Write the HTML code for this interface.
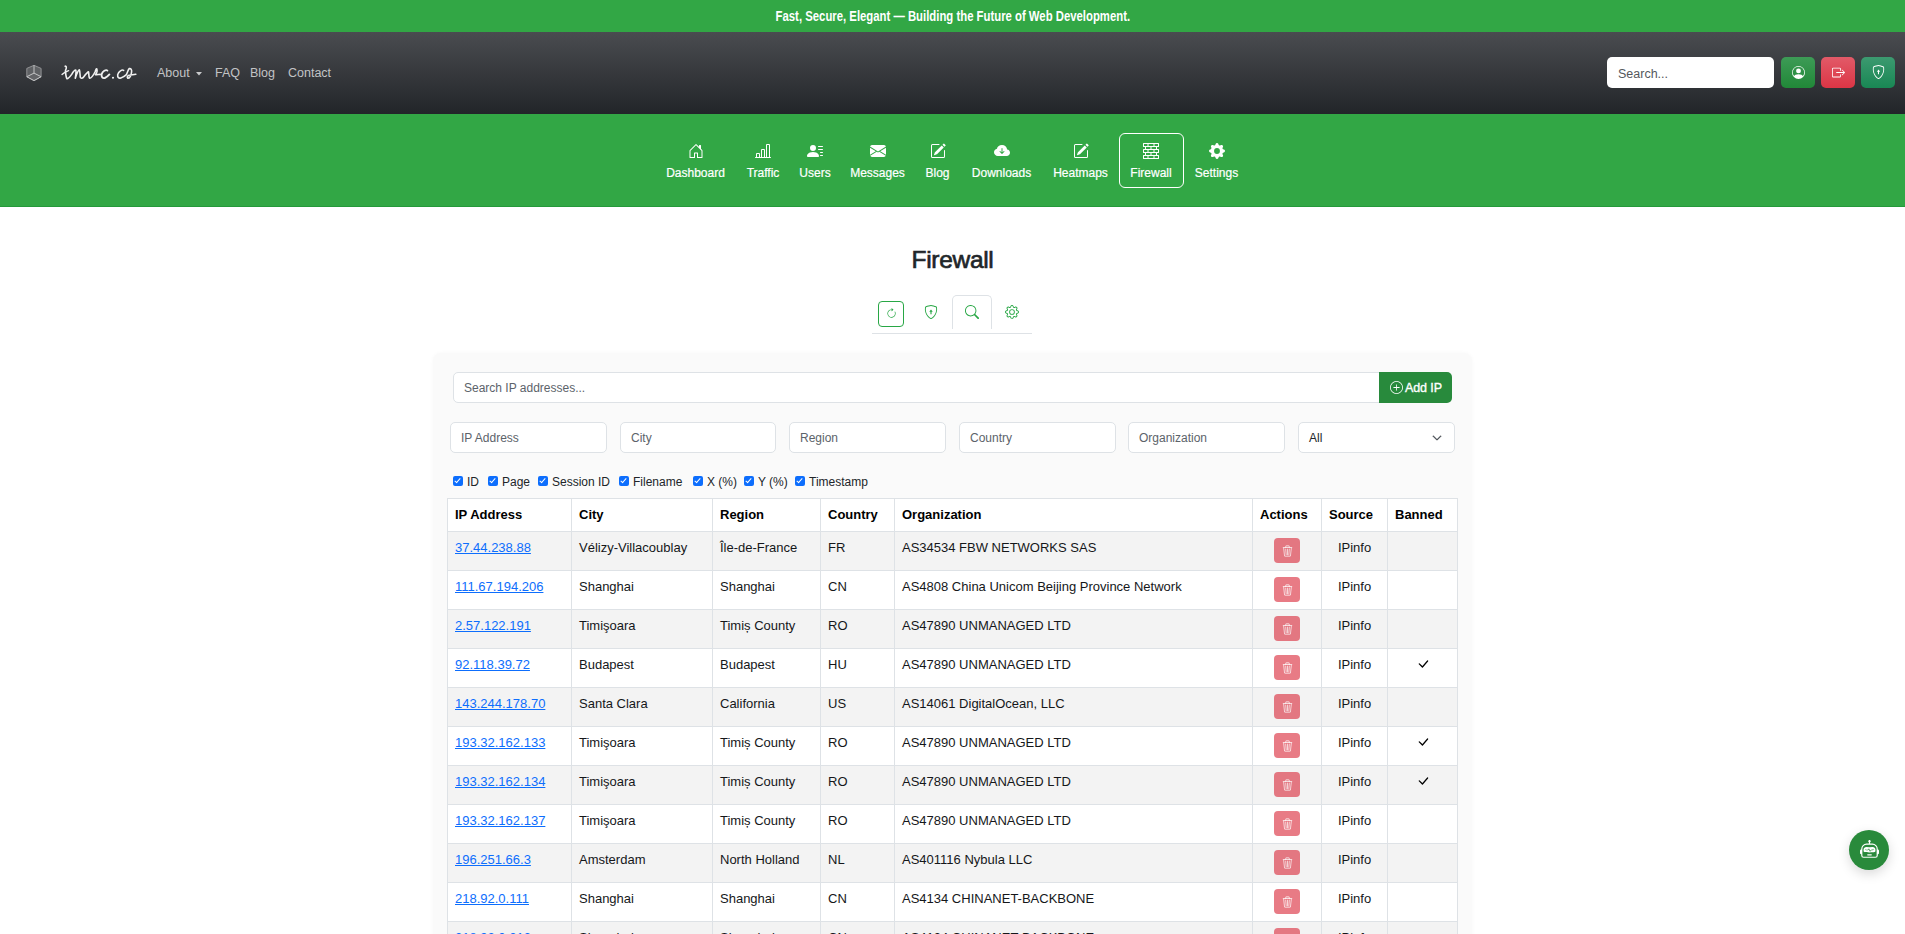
<!DOCTYPE html>
<html><head><meta charset="utf-8">
<style>
*{box-sizing:border-box;margin:0;padding:0}
html,body{width:1905px;height:934px;overflow:hidden;background:#fff;font-family:"Liberation Sans",sans-serif;color:#212529}
.abs{position:absolute}
.banner{position:absolute;left:0;top:0;width:1905px;height:32px;background:#32a745;color:#fff;font-weight:bold;font-size:14px;text-align:center;line-height:32px}
.navbar{position:absolute;left:0;top:32px;width:1905px;height:82px;background:linear-gradient(180deg,#4a4c50 0%,#222529 100%)}
.navlink{position:absolute;top:33px;font-size:12.5px;color:#c2c3c5;line-height:16px}
.search{position:absolute;left:1607px;top:25px;width:167px;height:31px;background:#fff;border-radius:5px;font-size:12.5px;color:#54585c;padding-left:11px;line-height:34px}
.hbtn{position:absolute;top:25px;width:34px;height:31px;border-radius:5px}
.subnav{position:absolute;left:0;top:114px;width:1905px;height:93px;background:#32a745;border-bottom:1px solid #24993a}
.item{position:absolute;top:19px;width:80px;height:55px;text-align:center;color:#fff;font-size:12px}
.item svg{position:absolute;top:10px;left:50%;transform:translateX(-50%)}
.item span{position:absolute;left:0;right:0;top:32px;line-height:16px;-webkit-text-stroke:0.2px #fff}
.item.active{border:1px solid #fff;border-radius:6px}

.title{position:absolute;left:0;width:1905px;top:245px;text-align:center;font-size:24.5px;font-weight:normal;letter-spacing:-0.3px;-webkit-text-stroke:0.65px #212529;line-height:30px;color:#212529}
.tabs{position:absolute;left:872px;top:295px;width:160px;height:39px;border-bottom:1px solid #dee2e6}
.tabs svg{position:absolute}
.card{position:absolute;left:433px;top:353px;width:1039px;height:700px;background:#fafafa;border-radius:8px;box-shadow:0 0 4px rgba(0,0,0,.03)}
.inp{position:absolute;background:#fff;border:1px solid #dee2e6;border-radius:5px;font-size:12px;color:#5c636a;padding-left:10px}
.cb{position:absolute;top:123px;height:14px;font-size:12px;line-height:14px;color:#212529;white-space:nowrap}
.cb i{position:absolute;left:0;top:0px;width:10px;height:10px;background:#0d6efd;border-radius:2px}
.cb i:after{content:"";position:absolute;left:3.3px;top:1px;width:2.2px;height:5px;border:solid #fff;border-width:0 1.4px 1.4px 0;transform:rotate(42deg)}
table{position:absolute;left:14px;top:145px;border-collapse:collapse;table-layout:fixed;font-size:13px;color:#15171a}
td,th{border:1px solid #dee2e6;padding:6px 7px;vertical-align:top;text-align:left;line-height:19.5px;white-space:nowrap;overflow:hidden}
th{height:33px;padding-top:6px;font-weight:bold;color:#000;background:#fff}
tbody tr:nth-child(odd) td{background:#f3f3f3}
tbody tr:nth-child(even) td{background:#fff}
td{height:39px}
td a{color:#0d6efd;text-decoration:underline}
.del{display:inline-block;width:26px;height:25px;border-radius:4px;background:#dc3545;opacity:.65;position:relative;vertical-align:top}
.del svg{position:absolute;left:7.5px;top:6.5px}
.c{text-align:center}
</style></head>
<body>
<div class="banner"><span style="display:inline-block;transform:scaleX(0.81);transform-origin:50% 50%;white-space:nowrap">Fast, Secure, Elegant — Building the Future of Web Development.</span></div>
<div class="navbar">
  <svg class="abs" style="left:26px;top:32px" width="16" height="18" viewBox="0 0 16 18">
    <path d="M8 1.3 L15.1 4.4 L15.1 12.7 L8 16.6 L0.8 12.7 L0.8 4.4 Z" fill="#5f6164" stroke="#9a9b9d" stroke-width="0.9" stroke-linejoin="round"/>
    <path d="M8 9.1 L0.8 12.7 L8 16.6 L15.1 12.7 Z" fill="#636467" stroke="#c4c5c6" stroke-width="1" stroke-linejoin="round"/>
    <path d="M8 1.3 V9.1" stroke="#b9babb" stroke-width="1.1"/>
  </svg>
  <svg class="abs" style="left:0;top:0" width="150" height="82" viewBox="0 32 150 82" fill="none" stroke="#f0f0f0" stroke-width="1.4" stroke-linecap="round" stroke-linejoin="round">
    <path d="M62,74.4 C64,72.6 66.5,71.2 68.6,70.6"/>
    <path d="M65.2,66.2 C66.3,65.9 66.9,67.4 65.5,70.4 C65.6,73.5 65.8,77 67,78.7 C68.8,78.8 70.5,76 71.8,74.2 C73,72 74.5,70 75.7,70 C76.3,70.8 76,74 75.3,78.2 C76.5,74.5 78,70.2 79.4,69.8 C80,70.8 80,75 80.3,77.3 C80.9,78.8 82.6,78.5 84,76.5 C85.5,74.5 87,72.5 88.5,71.8 C89,73 88.5,76.5 89.5,78.2 C91.5,78.4 93.5,75 95,72 C95.8,70 96.2,68.5 96.7,68.8 C97.3,70 96.7,73 95.5,74.8 C97.5,74.8 98.8,74.4 100.2,74.4" stroke-width="1.6"/>
    <path d="M107.4,70.6 C106,69.4 102.5,71 101.6,74.2 C101.2,77 102.5,78.6 104.8,78 C106.5,77.4 108,76 109.4,74.4" stroke-width="1.9"/>
    <path d="M123.6,70.4 C122.2,69.3 118.6,71.2 117.7,74.6 C117.4,77.2 118.6,78.6 120.8,78 C122.6,77.4 124.6,76.2 126.4,74.6 C127.6,72 128.2,69.6 129.2,68.6 C130.8,68.2 131.9,69.5 131.6,71.8 C131.2,75 129.6,78.2 127.8,78.2 C126.8,77.6 127.4,75.6 129,75.2 C131.5,75 134,74.6 135.8,74.2" stroke-width="1.6"/>
    <circle cx="113" cy="77.7" r="1.05" fill="#f0f0f0" stroke="none"/>
  </svg>
  <div class="navlink" style="left:157px">About</div>
  <svg class="abs" style="left:196px;top:40px" width="6" height="4"><path d="M0 0H6L3 3.5Z" fill="#c9cacc"/></svg>
  <div class="navlink" style="left:215px">FAQ</div>
  <div class="navlink" style="left:250px">Blog</div>
  <div class="navlink" style="left:288px">Contact</div>
  <div class="search">Search...</div>
  <div class="hbtn" style="left:1781px;background:linear-gradient(180deg,#3d9b56,#218838)"><svg style="position:absolute;left:10.5px;top:8.5px" width="13" height="13" viewBox="0 0 16 16" fill="#fff"><path d="M11 6a3 3 0 1 1-6 0 3 3 0 0 1 6 0"/><path fill-rule="evenodd" d="M0 8a8 8 0 1 1 16 0A8 8 0 0 1 0 8m8-7a7 7 0 0 0-5.468 11.37C3.242 11.226 4.805 10 8 10s4.757 1.225 5.468 2.37A7 7 0 0 0 8 1"/></svg></div>
  <div class="hbtn" style="left:1821px;background:linear-gradient(180deg,#e25a68,#dc3545)"><svg style="position:absolute;left:10.5px;top:9px" width="13" height="13" viewBox="0 0 16 16" fill="#fff"><path fill-rule="evenodd" d="M10 12.5a.5.5 0 0 1-.5.5h-8a.5.5 0 0 1-.5-.5v-9a.5.5 0 0 1 .5-.5h8a.5.5 0 0 1 .5.5v2a.5.5 0 0 0 1 0v-2A1.5 1.5 0 0 0 9.5 2h-8A1.5 1.5 0 0 0 0 3.5v9A1.5 1.5 0 0 0 1.5 14h8a1.5 1.5 0 0 0 1.5-1.5v-2a.5.5 0 0 0-1 0z"/><path fill-rule="evenodd" d="M15.854 8.354a.5.5 0 0 0 0-.708l-3-3a.5.5 0 0 0-.708.708L14.293 7.5H5.5a.5.5 0 0 0 0 1h8.793l-2.147 2.146a.5.5 0 0 0 .708.708z"/></svg></div>
  <div class="hbtn" style="left:1861px;background:linear-gradient(180deg,#3c9a70,#198754)"><svg style="position:absolute;left:10.5px;top:7.5px" width="13" height="14" viewBox="0 0 16 16" preserveAspectRatio="none" fill="#fff"><path d="M5.338 1.59a61 61 0 0 0-2.837.856.48.48 0 0 0-.328.39c-.554 4.157.726 7.19 2.253 9.188a10.7 10.7 0 0 0 2.287 2.233c.346.244.652.42.893.533q.18.085.293.118a1 1 0 0 0 .101.025 1 1 0 0 0 .1-.025q.114-.034.294-.118c.24-.113.547-.29.893-.533a10.7 10.7 0 0 0 2.287-2.233c1.527-1.997 2.807-5.031 2.253-9.188a.48.48 0 0 0-.328-.39c-.651-.213-1.75-.56-2.837-.855C9.552 1.290 8.531 1.067 8 1.067c-.53 0-1.552.223-2.662.524zM5.072.56C6.157.265 7.31 0 8 0s1.843.265 2.928.56c1.11.3 2.229.655 2.887.87a1.54 1.54 0 0 1 1.044 1.262c.596 4.477-.787 7.795-2.465 9.99a11.8 11.8 0 0 1-2.517 2.453 7 7 0 0 1-1.048.625c-.28.132-.581.24-.829.24s-.548-.108-.829-.24a7 7 0 0 1-1.048-.625 11.8 11.8 0 0 1-2.517-2.453C1.928 10.487.545 7.169 1.141 2.692A1.54 1.54 0 0 1 2.185 1.43 63 63 0 0 1 5.072.56"/><path d="M8 5.2 L10 7.6 H8.65 V10.6 H7.35 V7.6 H6 Z"/></svg></div>
</div>
<div class="subnav">
  <div class="item" style="left:655.5px"><svg width="16" height="16" viewBox="0 0 16 16" fill="#fff"><path d="M8.354 1.146a.5.5 0 0 0-.708 0l-6 6A.5.5 0 0 0 1.5 7.5v7a.5.5 0 0 0 .5.5h4.5a.5.5 0 0 0 .5-.5v-4h2v4a.5.5 0 0 0 .5.5H14a.5.5 0 0 0 .5-.5v-7a.5.5 0 0 0-.146-.354L13 5.793V2.5a.5.5 0 0 0-.5-.5h-1a.5.5 0 0 0-.5.5v1.293zM2.5 14V7.707l5.5-5.5 5.5 5.5V14H10v-4a.5.5 0 0 0-.5-.5h-3a.5.5 0 0 0-.5.5v4z"/></svg><span>Dashboard</span></div>
  <div class="item" style="left:723px"><svg width="16" height="16" viewBox="0 0 16 16" fill="#fff"><path d="M11 2a1 1 0 0 1 1-1h2a1 1 0 0 1 1 1v12h.5a.5.5 0 0 1 0 1H.5a.5.5 0 0 1 0-1H1v-3a1 1 0 0 1 1-1h2a1 1 0 0 1 1 1v3h1V7a1 1 0 0 1 1-1h2a1 1 0 0 1 1 1v7h1zm1 12h2V2h-2zm-3 0V7H7v7zm-5 0v-3H2v3z"/></svg><span>Traffic</span></div>
  <div class="item" style="left:775px"><svg width="16" height="16" viewBox="0 0 16 16" fill="#fff"><path d="M6 8a3 3 0 1 0 0-6 3 3 0 0 0 0 6m-5 6s-1 0-1-1 1-4 6-4 6 3 6 4-1 1-1 1zM11 3.5a.5.5 0 0 1 .5-.5h4a.5.5 0 0 1 0 1h-4a.5.5 0 0 1-.5-.5m.5 2.5a.5.5 0 0 0 0 1h4a.5.5 0 0 0 0-1zm2 3a.5.5 0 0 0 0 1h2a.5.5 0 0 0 0-1zm0 3a.5.5 0 0 0 0 1h2a.5.5 0 0 0 0-1z"/></svg><span>Users</span></div>
  <div class="item" style="left:837.5px"><svg width="16" height="16" viewBox="0 0 16 16" fill="#fff"><path d="M.05 3.555A2 2 0 0 1 2 2h12a2 2 0 0 1 1.95 1.555L8 8.414zM0 4.697v7.104l5.803-3.558zM6.761 8.83l-6.57 4.027A2 2 0 0 0 2 14h12a2 2 0 0 0 1.808-1.144l-6.57-4.027L8 9.586zm3.436-.586L16 11.801V4.697z"/></svg><span>Messages</span></div>
  <div class="item" style="left:897.5px"><svg width="16" height="16" viewBox="0 0 16 16" fill="#fff"><path d="M15.502 1.94a.5.5 0 0 1 0 .706L14.459 3.69l-2-2L13.502.646a.5.5 0 0 1 .707 0l1.293 1.293zm-1.75 2.456-2-2L4.939 9.21a.5.5 0 0 0-.121.196l-.805 2.414a.25.25 0 0 0 .316.316l2.414-.805a.5.5 0 0 0 .196-.12l6.813-6.814z"/><path fill-rule="evenodd" d="M1 13.5A1.5 1.5 0 0 0 2.5 15h11a1.5 1.5 0 0 0 1.5-1.5v-6a.5.5 0 0 0-1 0v6a.5.5 0 0 1-.5.5h-11a.5.5 0 0 1-.5-.5v-11a.5.5 0 0 1 .5-.5H9a.5.5 0 0 0 0-1H2.5A1.5 1.5 0 0 0 1 2.5z"/></svg><span>Blog</span></div>
  <div class="item" style="left:961.5px"><svg width="16" height="16" viewBox="0 0 16 16" fill="#fff"><path d="M8 2a5.53 5.53 0 0 0-3.594 1.342c-.766.66-1.321 1.52-1.464 2.383C1.266 6.095 0 7.555 0 9.318 0 11.366 1.708 13 3.781 13h8.906C14.502 13 16 11.57 16 9.773c0-1.636-1.242-2.969-2.834-3.194C12.923 3.999 10.69 2 8 2m2.354 6.854-2 2a.5.5 0 0 1-.708 0l-2-2a.5.5 0 1 1 .708-.708L7.5 9.293V5.5a.5.5 0 0 1 1 0v3.793l1.146-1.147a.5.5 0 0 1 .708.708"/></svg><span>Downloads</span></div>
  <div class="item" style="left:1040.5px"><svg width="16" height="16" viewBox="0 0 16 16" fill="#fff"><path d="M15.502 1.94a.5.5 0 0 1 0 .706L14.459 3.69l-2-2L13.502.646a.5.5 0 0 1 .707 0l1.293 1.293zm-1.75 2.456-2-2L4.939 9.21a.5.5 0 0 0-.121.196l-.805 2.414a.25.25 0 0 0 .316.316l2.414-.805a.5.5 0 0 0 .196-.12l6.813-6.814z"/><path fill-rule="evenodd" d="M1 13.5A1.5 1.5 0 0 0 2.5 15h11a1.5 1.5 0 0 0 1.5-1.5v-6a.5.5 0 0 0-1 0v6a.5.5 0 0 1-.5.5h-11a.5.5 0 0 1-.5-.5v-11a.5.5 0 0 1 .5-.5H9a.5.5 0 0 0 0-1H2.5A1.5 1.5 0 0 0 1 2.5z"/></svg><span>Heatmaps</span></div>
  <div class="item" style="left:1111px"><svg width="16" height="16" viewBox="0 0 16 16" fill="#fff"><path d="M0 .5A.5.5 0 0 1 .5 0h15a.5.5 0 0 1 .5.5v3a.5.5 0 0 1-.5.5H14v2h1.5a.5.5 0 0 1 .5.5v3a.5.5 0 0 1-.5.5H14v2h1.5a.5.5 0 0 1 .5.5v3a.5.5 0 0 1-.5.5H.5a.5.5 0 0 1-.5-.5v-3a.5.5 0 0 1 .5-.5H2v-2H.5a.5.5 0 0 1-.5-.5v-3A.5.5 0 0 1 .5 6H2V4H.5a.5.5 0 0 1-.5-.5zM3 4v2h4.5V4zm5.5 0v2H13V4zM3 10v2h4.5v-2zm5.5 0v2H13v-2zM1 1v2h3.5V1zm4.5 0v2h5V1zm6 0v2H15V1zM1 7v2h3.5V7zm4.5 0v2h5V7zm6 0v2H15V7zM1 13v2h3.5v-2zm4.5 0v2h5v-2zm6 0v2H15v-2z"/></svg><span>Firewall</span></div>
  <div class="item" style="left:1176.5px"><svg width="16" height="16" viewBox="0 0 16 16" fill="#fff"><path d="M9.405 1.05c-.413-1.4-2.397-1.4-2.81 0l-.1.34a1.464 1.464 0 0 1-2.105.872l-.31-.17c-1.283-.698-2.686.705-1.987 1.987l.169.311c.446.82.023 1.841-.872 2.105l-.34.1c-1.4.413-1.4 2.397 0 2.81l.34.1a1.464 1.464 0 0 1 .872 2.105l-.17.31c-.698 1.283.705 2.686 1.987 1.987l.311-.169a1.464 1.464 0 0 1 2.105.872l.1.34c.413 1.4 2.397 1.4 2.81 0l.1-.34a1.464 1.464 0 0 1 2.105-.872l.31.17c1.283.698 2.686-.705 1.987-1.987l-.169-.311a1.464 1.464 0 0 1 .872-2.105l.34-.1c1.4-.413 1.4-2.397 0-2.81l-.34-.1a1.464 1.464 0 0 1-.872-2.105l.17-.31c.698-1.283-.705-2.686-1.987-1.987l-.311.169a1.464 1.464 0 0 1-2.105-.872zM8 10.93a2.929 2.929 0 1 1 0-5.86 2.929 2.929 0 0 1 0 5.858z"/></svg><span>Settings</span></div>
  <div class="active" style="position:absolute;left:1119px;top:19px;width:65px;height:55px;border:1px solid #fff;border-radius:6px"></div>
</div>

<div class="title">Firewall</div>
<div class="tabs">
  <div style="position:absolute;left:6px;top:6px;width:26px;height:26px;border:1.5px solid #28a745;border-radius:4px"></div>
  <svg style="left:14px;top:13px" width="11" height="11" viewBox="0 0 16 16" fill="#28a745"><path fill-rule="evenodd" d="M8 3a5 5 0 1 0 4.546 2.914.5.5 0 0 1 .908-.417A6 6 0 1 1 8 2z"/><path d="M8 4.466V.534a.25.25 0 0 1 .41-.192l2.36 1.966c.12.1.12.284 0 .384L8.41 4.658A.25.25 0 0 1 8 4.466"/></svg>
  <svg style="left:52px;top:9.5px" width="14" height="14" viewBox="0 0 16 16" fill="#28a745"><path d="M5.338 1.59a61 61 0 0 0-2.837.856.48.48 0 0 0-.328.39c-.554 4.157.726 7.19 2.253 9.188a10.7 10.7 0 0 0 2.287 2.233c.346.244.652.42.893.533q.18.085.293.118a1 1 0 0 0 .101.025 1 1 0 0 0 .1-.025q.114-.034.294-.118c.24-.113.547-.29.893-.533a10.7 10.7 0 0 0 2.287-2.233c1.527-1.997 2.807-5.031 2.253-9.188a.48.48 0 0 0-.328-.39c-.651-.213-1.75-.56-2.837-.855C9.552 1.290 8.531 1.067 8 1.067c-.53 0-1.552.223-2.662.524zM5.072.56C6.157.265 7.31 0 8 0s1.843.265 2.928.56c1.11.3 2.229.655 2.887.87a1.54 1.54 0 0 1 1.044 1.262c.596 4.477-.787 7.795-2.465 9.99a11.8 11.8 0 0 1-2.517 2.453 7 7 0 0 1-1.048.625c-.28.132-.581.24-.829.24s-.548-.108-.829-.24a7 7 0 0 1-1.048-.625 11.8 11.8 0 0 1-2.517-2.453C1.928 10.487.545 7.169 1.141 2.692A1.54 1.54 0 0 1 2.185 1.43 63 63 0 0 1 5.072.56"/><path d="M8 5.2 L10 7.6 H8.65 V10.6 H7.35 V7.6 H6 Z"/></svg>
  <div style="position:absolute;left:80px;top:0;width:40px;height:34px;border:1px solid #dee2e6;border-bottom:0;border-radius:5px 5px 0 0;background:#fff"></div>
  <svg style="left:93px;top:9.5px" width="14" height="14" viewBox="0 0 16 16" fill="#28a745"><path d="M11.742 10.344a6.5 6.5 0 1 0-1.397 1.398h-.001q.044.06.098.115l3.850 3.850a1 1 0 0 0 1.415-1.414l-3.850-3.850a1 1 0 0 0-.115-.1zM12 6.5a5.5 5.5 0 1 1-11 0 5.5 5.5 0 0 1 11 0"/></svg>
  <svg style="left:133px;top:9.5px" width="14" height="14" viewBox="0 0 16 16" fill="#28a745"><path d="M8 4.754a3.246 3.246 0 1 0 0 6.492 3.246 3.246 0 0 0 0-6.492M5.754 8a2.246 2.246 0 1 1 4.492 0 2.246 2.246 0 0 1-4.492 0"/><path d="M9.796 1.343c-.527-1.790-3.065-1.790-3.592 0l-.094.319a.873.873 0 0 1-1.255.52l-.292-.16c-1.640-.892-3.433.902-2.540 2.541l.159.292a.873.873 0 0 1-.52 1.255l-.319.094c-1.790.527-1.790 3.065 0 3.592l.319.094a.873.873 0 0 1 .52 1.255l-.16.292c-.892 1.640.901 3.434 2.541 2.540l.292-.159a.873.873 0 0 1 1.255.52l.094.319c.527 1.790 3.065 1.790 3.592 0l.094-.319a.873.873 0 0 1 1.255-.52l.292.16c1.640.893 3.434-.902 2.540-2.541l-.159-.292a.873.873 0 0 1 .52-1.255l.319-.094c1.790-.527 1.790-3.065 0-3.592l-.319-.094a.873.873 0 0 1-.52-1.255l.16-.292c.893-1.640-.902-3.433-2.541-2.540l-.292.159a.873.873 0 0 1-1.255-.52zm-2.633.283c.246-.835 1.428-.835 1.674 0l.094.319a1.873 1.873 0 0 0 2.693 1.115l.291-.16c.764-.415 1.600.42 1.184 1.185l-.159.292a1.873 1.873 0 0 0 1.116 2.692l.318.094c.835.246.835 1.428 0 1.674l-.319.094a1.873 1.873 0 0 0-1.115 2.693l.16.291c.415.764-.42 1.600-1.185 1.184l-.291-.159a1.873 1.873 0 0 0-2.693 1.116l-.094.318c-.246.835-1.428.835-1.674 0l-.094-.319a1.873 1.873 0 0 0-2.692-1.115l-.292.16c-.764.415-1.600-.42-1.184-1.185l.159-.291A1.873 1.873 0 0 0 1.945 8.930l-.319-.094c-.835-.246-.835-1.428 0-1.674l.319-.094A1.873 1.873 0 0 0 3.060 4.377l-.16-.292c-.415-.764.42-1.600 1.185-1.184l.292.159a1.873 1.873 0 0 0 2.692-1.115z"/></svg>
</div>
<div class="card">
  <div class="inp" style="left:20px;top:19px;width:936px;height:31px;line-height:31px;border-radius:5px 0 0 5px">Search IP addresses...</div>
  <div style="position:absolute;left:946px;top:19px;width:73px;height:31px;background:#288a3c;border-radius:0 5px 5px 0;color:#fff;font-size:12.5px;font-weight:normal;-webkit-text-stroke:0.35px #fff;line-height:33px;padding-left:26px;letter-spacing:-0.1px">Add IP</div>
  <svg style="position:absolute;left:957px;top:28px" width="13" height="13" viewBox="0 0 16 16" fill="#fff"><path d="M8 15A7 7 0 1 1 8 1a7 7 0 0 1 0 14m0 1A8 8 0 1 0 8 0a8 8 0 0 0 0 16"/><path d="M8 4a.5.5 0 0 1 .5.5v3h3a.5.5 0 0 1 0 1h-3v3a.5.5 0 0 1-1 0v-3h-3a.5.5 0 0 1 0-1h3v-3A.5.5 0 0 1 8 4"/></svg>
  <div class="inp" style="left:17px;top:69px;width:157px;height:31px;line-height:31px">IP Address</div>
  <div class="inp" style="left:187px;top:69px;width:156px;height:31px;line-height:31px">City</div>
  <div class="inp" style="left:356px;top:69px;width:157px;height:31px;line-height:31px">Region</div>
  <div class="inp" style="left:526px;top:69px;width:157px;height:31px;line-height:31px">Country</div>
  <div class="inp" style="left:695px;top:69px;width:157px;height:31px;line-height:31px">Organization</div>
  <div class="inp" style="left:865px;top:69px;width:157px;height:31px;line-height:31px;color:#212529">All
    <svg style="position:absolute;right:12px;top:10px" width="10" height="10" viewBox="0 0 16 16" fill="#343a40"><path fill-rule="evenodd" stroke="#343a40" stroke-width="1" d="M1.646 4.646a.5.5 0 0 1 .708 0L8 10.293l5.646-5.647a.5.5 0 0 1 .708.708l-6 6a.5.5 0 0 1-.708 0l-6-6a.5.5 0 0 1 0-.708"/></svg>
  </div>
  <div class="cb" style="left:20px"><i></i><span style="position:absolute;left:14px;top:-1px">ID</span></div>
  <div class="cb" style="left:55px"><i></i><span style="position:absolute;left:14px;top:-1px">Page</span></div>
  <div class="cb" style="left:105px"><i></i><span style="position:absolute;left:14px;top:-1px">Session ID</span></div>
  <div class="cb" style="left:186px"><i></i><span style="position:absolute;left:14px;top:-1px">Filename</span></div>
  <div class="cb" style="left:260px"><i></i><span style="position:absolute;left:14px;top:-1px">X (%)</span></div>
  <div class="cb" style="left:311px"><i></i><span style="position:absolute;left:14px;top:-1px">Y (%)</span></div>
  <div class="cb" style="left:362px"><i></i><span style="position:absolute;left:14px;top:-1px">Timestamp</span></div>
  <table>
<colgroup><col style="width:124px"><col style="width:141px"><col style="width:108px"><col style="width:74px"><col style="width:358px"><col style="width:69px"><col style="width:66px"><col style="width:70px"></colgroup>
<thead><tr><th>IP Address</th><th>City</th><th>Region</th><th>Country</th><th>Organization</th><th>Actions</th><th>Source</th><th>Banned</th></tr></thead><tbody>
<tr><td><a>37.44.238.88</a></td><td>Vélizy-Villacoublay</td><td>Île-de-France</td><td>FR</td><td>AS34534 FBW NETWORKS SAS</td><td class="c"><span class="del"><svg width="11" height="12" viewBox="0 0 16 16" fill="#fff"><path d="M6.5 1h3a.5.5 0 0 1 .5.5v1H6v-1a.5.5 0 0 1 .5-.5M11 2.5v-1A1.5 1.5 0 0 0 9.5 0h-3A1.5 1.5 0 0 0 5 1.5v1H1.5a.5.5 0 0 0 0 1h.538l.853 10.66A2 2 0 0 0 4.885 16h6.23a2 2 0 0 0 1.994-1.84l.853-10.66h.538a.5.5 0 0 0 0-1zm1.958 1-.846 10.58a1 1 0 0 1-.997.92h-6.23a1 1 0 0 1-.997-.92L3.042 3.5zm-7.487 1a.5.5 0 0 1 .528.47l.5 8.5a.5.5 0 0 1-.998.06L5 5.03a.5.5 0 0 1 .47-.53Zm5.058 0a.5.5 0 0 1 .47.53l-.5 8.5a.5.5 0 1 1-.998-.06l.5-8.5a.5.5 0 0 1 .528-.47M8 4.5a.5.5 0 0 1 .5.5v8.5a.5.5 0 0 1-1 0V5a.5.5 0 0 1 .5-.5"/></svg></span></td><td class="c">IPinfo</td><td class="c"></td></tr>
<tr><td><a>111.67.194.206</a></td><td>Shanghai</td><td>Shanghai</td><td>CN</td><td>AS4808 China Unicom Beijing Province Network</td><td class="c"><span class="del"><svg width="11" height="12" viewBox="0 0 16 16" fill="#fff"><path d="M6.5 1h3a.5.5 0 0 1 .5.5v1H6v-1a.5.5 0 0 1 .5-.5M11 2.5v-1A1.5 1.5 0 0 0 9.5 0h-3A1.5 1.5 0 0 0 5 1.5v1H1.5a.5.5 0 0 0 0 1h.538l.853 10.66A2 2 0 0 0 4.885 16h6.23a2 2 0 0 0 1.994-1.84l.853-10.66h.538a.5.5 0 0 0 0-1zm1.958 1-.846 10.58a1 1 0 0 1-.997.92h-6.23a1 1 0 0 1-.997-.92L3.042 3.5zm-7.487 1a.5.5 0 0 1 .528.47l.5 8.5a.5.5 0 0 1-.998.06L5 5.03a.5.5 0 0 1 .47-.53Zm5.058 0a.5.5 0 0 1 .47.53l-.5 8.5a.5.5 0 1 1-.998-.06l.5-8.5a.5.5 0 0 1 .528-.47M8 4.5a.5.5 0 0 1 .5.5v8.5a.5.5 0 0 1-1 0V5a.5.5 0 0 1 .5-.5"/></svg></span></td><td class="c">IPinfo</td><td class="c"></td></tr>
<tr><td><a>2.57.122.191</a></td><td>Timişoara</td><td>Timiș County</td><td>RO</td><td>AS47890 UNMANAGED LTD</td><td class="c"><span class="del"><svg width="11" height="12" viewBox="0 0 16 16" fill="#fff"><path d="M6.5 1h3a.5.5 0 0 1 .5.5v1H6v-1a.5.5 0 0 1 .5-.5M11 2.5v-1A1.5 1.5 0 0 0 9.5 0h-3A1.5 1.5 0 0 0 5 1.5v1H1.5a.5.5 0 0 0 0 1h.538l.853 10.66A2 2 0 0 0 4.885 16h6.23a2 2 0 0 0 1.994-1.84l.853-10.66h.538a.5.5 0 0 0 0-1zm1.958 1-.846 10.58a1 1 0 0 1-.997.92h-6.23a1 1 0 0 1-.997-.92L3.042 3.5zm-7.487 1a.5.5 0 0 1 .528.47l.5 8.5a.5.5 0 0 1-.998.06L5 5.03a.5.5 0 0 1 .47-.53Zm5.058 0a.5.5 0 0 1 .47.53l-.5 8.5a.5.5 0 1 1-.998-.06l.5-8.5a.5.5 0 0 1 .528-.47M8 4.5a.5.5 0 0 1 .5.5v8.5a.5.5 0 0 1-1 0V5a.5.5 0 0 1 .5-.5"/></svg></span></td><td class="c">IPinfo</td><td class="c"></td></tr>
<tr><td><a>92.118.39.72</a></td><td>Budapest</td><td>Budapest</td><td>HU</td><td>AS47890 UNMANAGED LTD</td><td class="c"><span class="del"><svg width="11" height="12" viewBox="0 0 16 16" fill="#fff"><path d="M6.5 1h3a.5.5 0 0 1 .5.5v1H6v-1a.5.5 0 0 1 .5-.5M11 2.5v-1A1.5 1.5 0 0 0 9.5 0h-3A1.5 1.5 0 0 0 5 1.5v1H1.5a.5.5 0 0 0 0 1h.538l.853 10.66A2 2 0 0 0 4.885 16h6.23a2 2 0 0 0 1.994-1.84l.853-10.66h.538a.5.5 0 0 0 0-1zm1.958 1-.846 10.58a1 1 0 0 1-.997.92h-6.23a1 1 0 0 1-.997-.92L3.042 3.5zm-7.487 1a.5.5 0 0 1 .528.47l.5 8.5a.5.5 0 0 1-.998.06L5 5.03a.5.5 0 0 1 .47-.53Zm5.058 0a.5.5 0 0 1 .47.53l-.5 8.5a.5.5 0 1 1-.998-.06l.5-8.5a.5.5 0 0 1 .528-.47M8 4.5a.5.5 0 0 1 .5.5v8.5a.5.5 0 0 1-1 0V5a.5.5 0 0 1 .5-.5"/></svg></span></td><td class="c">IPinfo</td><td class="c"><svg width="14" height="14" viewBox="0 0 16 16" fill="#000" style="margin-top:2px;margin-left:1px"><path d="M12.736 3.97a.733.733 0 0 1 1.047 0c.286.289.29.756.01 1.05L7.88 12.01a.733.733 0 0 1-1.065.02L3.217 8.384a.757.757 0 0 1 0-1.06.733.733 0 0 1 1.047 0l3.052 3.093 5.4-6.425z"/></svg></td></tr>
<tr><td><a>143.244.178.70</a></td><td>Santa Clara</td><td>California</td><td>US</td><td>AS14061 DigitalOcean, LLC</td><td class="c"><span class="del"><svg width="11" height="12" viewBox="0 0 16 16" fill="#fff"><path d="M6.5 1h3a.5.5 0 0 1 .5.5v1H6v-1a.5.5 0 0 1 .5-.5M11 2.5v-1A1.5 1.5 0 0 0 9.5 0h-3A1.5 1.5 0 0 0 5 1.5v1H1.5a.5.5 0 0 0 0 1h.538l.853 10.66A2 2 0 0 0 4.885 16h6.23a2 2 0 0 0 1.994-1.84l.853-10.66h.538a.5.5 0 0 0 0-1zm1.958 1-.846 10.58a1 1 0 0 1-.997.92h-6.23a1 1 0 0 1-.997-.92L3.042 3.5zm-7.487 1a.5.5 0 0 1 .528.47l.5 8.5a.5.5 0 0 1-.998.06L5 5.03a.5.5 0 0 1 .47-.53Zm5.058 0a.5.5 0 0 1 .47.53l-.5 8.5a.5.5 0 1 1-.998-.06l.5-8.5a.5.5 0 0 1 .528-.47M8 4.5a.5.5 0 0 1 .5.5v8.5a.5.5 0 0 1-1 0V5a.5.5 0 0 1 .5-.5"/></svg></span></td><td class="c">IPinfo</td><td class="c"></td></tr>
<tr><td><a>193.32.162.133</a></td><td>Timişoara</td><td>Timiș County</td><td>RO</td><td>AS47890 UNMANAGED LTD</td><td class="c"><span class="del"><svg width="11" height="12" viewBox="0 0 16 16" fill="#fff"><path d="M6.5 1h3a.5.5 0 0 1 .5.5v1H6v-1a.5.5 0 0 1 .5-.5M11 2.5v-1A1.5 1.5 0 0 0 9.5 0h-3A1.5 1.5 0 0 0 5 1.5v1H1.5a.5.5 0 0 0 0 1h.538l.853 10.66A2 2 0 0 0 4.885 16h6.23a2 2 0 0 0 1.994-1.84l.853-10.66h.538a.5.5 0 0 0 0-1zm1.958 1-.846 10.58a1 1 0 0 1-.997.92h-6.23a1 1 0 0 1-.997-.92L3.042 3.5zm-7.487 1a.5.5 0 0 1 .528.47l.5 8.5a.5.5 0 0 1-.998.06L5 5.03a.5.5 0 0 1 .47-.53Zm5.058 0a.5.5 0 0 1 .47.53l-.5 8.5a.5.5 0 1 1-.998-.06l.5-8.5a.5.5 0 0 1 .528-.47M8 4.5a.5.5 0 0 1 .5.5v8.5a.5.5 0 0 1-1 0V5a.5.5 0 0 1 .5-.5"/></svg></span></td><td class="c">IPinfo</td><td class="c"><svg width="14" height="14" viewBox="0 0 16 16" fill="#000" style="margin-top:2px;margin-left:1px"><path d="M12.736 3.97a.733.733 0 0 1 1.047 0c.286.289.29.756.01 1.05L7.88 12.01a.733.733 0 0 1-1.065.02L3.217 8.384a.757.757 0 0 1 0-1.06.733.733 0 0 1 1.047 0l3.052 3.093 5.4-6.425z"/></svg></td></tr>
<tr><td><a>193.32.162.134</a></td><td>Timişoara</td><td>Timiș County</td><td>RO</td><td>AS47890 UNMANAGED LTD</td><td class="c"><span class="del"><svg width="11" height="12" viewBox="0 0 16 16" fill="#fff"><path d="M6.5 1h3a.5.5 0 0 1 .5.5v1H6v-1a.5.5 0 0 1 .5-.5M11 2.5v-1A1.5 1.5 0 0 0 9.5 0h-3A1.5 1.5 0 0 0 5 1.5v1H1.5a.5.5 0 0 0 0 1h.538l.853 10.66A2 2 0 0 0 4.885 16h6.23a2 2 0 0 0 1.994-1.84l.853-10.66h.538a.5.5 0 0 0 0-1zm1.958 1-.846 10.58a1 1 0 0 1-.997.92h-6.23a1 1 0 0 1-.997-.92L3.042 3.5zm-7.487 1a.5.5 0 0 1 .528.47l.5 8.5a.5.5 0 0 1-.998.06L5 5.03a.5.5 0 0 1 .47-.53Zm5.058 0a.5.5 0 0 1 .47.53l-.5 8.5a.5.5 0 1 1-.998-.06l.5-8.5a.5.5 0 0 1 .528-.47M8 4.5a.5.5 0 0 1 .5.5v8.5a.5.5 0 0 1-1 0V5a.5.5 0 0 1 .5-.5"/></svg></span></td><td class="c">IPinfo</td><td class="c"><svg width="14" height="14" viewBox="0 0 16 16" fill="#000" style="margin-top:2px;margin-left:1px"><path d="M12.736 3.97a.733.733 0 0 1 1.047 0c.286.289.29.756.01 1.05L7.88 12.01a.733.733 0 0 1-1.065.02L3.217 8.384a.757.757 0 0 1 0-1.06.733.733 0 0 1 1.047 0l3.052 3.093 5.4-6.425z"/></svg></td></tr>
<tr><td><a>193.32.162.137</a></td><td>Timişoara</td><td>Timiș County</td><td>RO</td><td>AS47890 UNMANAGED LTD</td><td class="c"><span class="del"><svg width="11" height="12" viewBox="0 0 16 16" fill="#fff"><path d="M6.5 1h3a.5.5 0 0 1 .5.5v1H6v-1a.5.5 0 0 1 .5-.5M11 2.5v-1A1.5 1.5 0 0 0 9.5 0h-3A1.5 1.5 0 0 0 5 1.5v1H1.5a.5.5 0 0 0 0 1h.538l.853 10.66A2 2 0 0 0 4.885 16h6.23a2 2 0 0 0 1.994-1.84l.853-10.66h.538a.5.5 0 0 0 0-1zm1.958 1-.846 10.58a1 1 0 0 1-.997.92h-6.23a1 1 0 0 1-.997-.92L3.042 3.5zm-7.487 1a.5.5 0 0 1 .528.47l.5 8.5a.5.5 0 0 1-.998.06L5 5.03a.5.5 0 0 1 .47-.53Zm5.058 0a.5.5 0 0 1 .47.53l-.5 8.5a.5.5 0 1 1-.998-.06l.5-8.5a.5.5 0 0 1 .528-.47M8 4.5a.5.5 0 0 1 .5.5v8.5a.5.5 0 0 1-1 0V5a.5.5 0 0 1 .5-.5"/></svg></span></td><td class="c">IPinfo</td><td class="c"></td></tr>
<tr><td><a>196.251.66.3</a></td><td>Amsterdam</td><td>North Holland</td><td>NL</td><td>AS401116 Nybula LLC</td><td class="c"><span class="del"><svg width="11" height="12" viewBox="0 0 16 16" fill="#fff"><path d="M6.5 1h3a.5.5 0 0 1 .5.5v1H6v-1a.5.5 0 0 1 .5-.5M11 2.5v-1A1.5 1.5 0 0 0 9.5 0h-3A1.5 1.5 0 0 0 5 1.5v1H1.5a.5.5 0 0 0 0 1h.538l.853 10.66A2 2 0 0 0 4.885 16h6.23a2 2 0 0 0 1.994-1.84l.853-10.66h.538a.5.5 0 0 0 0-1zm1.958 1-.846 10.58a1 1 0 0 1-.997.92h-6.23a1 1 0 0 1-.997-.92L3.042 3.5zm-7.487 1a.5.5 0 0 1 .528.47l.5 8.5a.5.5 0 0 1-.998.06L5 5.03a.5.5 0 0 1 .47-.53Zm5.058 0a.5.5 0 0 1 .47.53l-.5 8.5a.5.5 0 1 1-.998-.06l.5-8.5a.5.5 0 0 1 .528-.47M8 4.5a.5.5 0 0 1 .5.5v8.5a.5.5 0 0 1-1 0V5a.5.5 0 0 1 .5-.5"/></svg></span></td><td class="c">IPinfo</td><td class="c"></td></tr>
<tr><td><a>218.92.0.111</a></td><td>Shanghai</td><td>Shanghai</td><td>CN</td><td>AS4134 CHINANET-BACKBONE</td><td class="c"><span class="del"><svg width="11" height="12" viewBox="0 0 16 16" fill="#fff"><path d="M6.5 1h3a.5.5 0 0 1 .5.5v1H6v-1a.5.5 0 0 1 .5-.5M11 2.5v-1A1.5 1.5 0 0 0 9.5 0h-3A1.5 1.5 0 0 0 5 1.5v1H1.5a.5.5 0 0 0 0 1h.538l.853 10.66A2 2 0 0 0 4.885 16h6.23a2 2 0 0 0 1.994-1.84l.853-10.66h.538a.5.5 0 0 0 0-1zm1.958 1-.846 10.58a1 1 0 0 1-.997.92h-6.23a1 1 0 0 1-.997-.92L3.042 3.5zm-7.487 1a.5.5 0 0 1 .528.47l.5 8.5a.5.5 0 0 1-.998.06L5 5.03a.5.5 0 0 1 .47-.53Zm5.058 0a.5.5 0 0 1 .47.53l-.5 8.5a.5.5 0 1 1-.998-.06l.5-8.5a.5.5 0 0 1 .528-.47M8 4.5a.5.5 0 0 1 .5.5v8.5a.5.5 0 0 1-1 0V5a.5.5 0 0 1 .5-.5"/></svg></span></td><td class="c">IPinfo</td><td class="c"></td></tr>
<tr><td><a>218.92.0.213</a></td><td>Shanghai</td><td>Shanghai</td><td>CN</td><td>AS4134 CHINANET-BACKBONE</td><td class="c"><span class="del"><svg width="11" height="12" viewBox="0 0 16 16" fill="#fff"><path d="M6.5 1h3a.5.5 0 0 1 .5.5v1H6v-1a.5.5 0 0 1 .5-.5M11 2.5v-1A1.5 1.5 0 0 0 9.5 0h-3A1.5 1.5 0 0 0 5 1.5v1H1.5a.5.5 0 0 0 0 1h.538l.853 10.66A2 2 0 0 0 4.885 16h6.23a2 2 0 0 0 1.994-1.84l.853-10.66h.538a.5.5 0 0 0 0-1zm1.958 1-.846 10.58a1 1 0 0 1-.997.92h-6.23a1 1 0 0 1-.997-.92L3.042 3.5zm-7.487 1a.5.5 0 0 1 .528.47l.5 8.5a.5.5 0 0 1-.998.06L5 5.03a.5.5 0 0 1 .47-.53Zm5.058 0a.5.5 0 0 1 .47.53l-.5 8.5a.5.5 0 1 1-.998-.06l.5-8.5a.5.5 0 0 1 .528-.47M8 4.5a.5.5 0 0 1 .5.5v8.5a.5.5 0 0 1-1 0V5a.5.5 0 0 1 .5-.5"/></svg></span></td><td class="c">IPinfo</td><td class="c"></td></tr>
<tr><td><a>218.92.0.215</a></td><td>Shanghai</td><td>Shanghai</td><td>CN</td><td>AS4134 CHINANET-BACKBONE</td><td class="c"><span class="del"><svg width="11" height="12" viewBox="0 0 16 16" fill="#fff"><path d="M6.5 1h3a.5.5 0 0 1 .5.5v1H6v-1a.5.5 0 0 1 .5-.5M11 2.5v-1A1.5 1.5 0 0 0 9.5 0h-3A1.5 1.5 0 0 0 5 1.5v1H1.5a.5.5 0 0 0 0 1h.538l.853 10.66A2 2 0 0 0 4.885 16h6.23a2 2 0 0 0 1.994-1.84l.853-10.66h.538a.5.5 0 0 0 0-1zm1.958 1-.846 10.58a1 1 0 0 1-.997.92h-6.23a1 1 0 0 1-.997-.92L3.042 3.5zm-7.487 1a.5.5 0 0 1 .528.47l.5 8.5a.5.5 0 0 1-.998.06L5 5.03a.5.5 0 0 1 .47-.53Zm5.058 0a.5.5 0 0 1 .47.53l-.5 8.5a.5.5 0 1 1-.998-.06l.5-8.5a.5.5 0 0 1 .528-.47M8 4.5a.5.5 0 0 1 .5.5v8.5a.5.5 0 0 1-1 0V5a.5.5 0 0 1 .5-.5"/></svg></span></td><td class="c">IPinfo</td><td class="c"></td></tr>
</tbody></table>
</div>
<div style="position:absolute;left:1849px;top:830px;width:40px;height:40px;border-radius:50%;background:#298a3b;box-shadow:0 4px 12px rgba(0,0,0,.15)">
  <svg style="position:absolute;left:10.5px;top:10px" width="19" height="19" viewBox="0 0 16 16" fill="#fff"><path d="M6 12.5a.5.5 0 0 1 .5-.5h3a.5.5 0 0 1 0 1h-3a.5.5 0 0 1-.5-.5M3 8.062C3 6.760 4.235 5.765 5.530 5.886a26.6 26.6 0 0 0 4.940 0C11.765 5.765 13 6.760 13 8.062v1.157a.93.93 0 0 1-.765.935c-.845.147-2.340.346-4.235.346s-3.390-.2-4.235-.346A.93.93 0 0 1 3 9.219zm4.542-.827a.25.25 0 0 0-.217.068l-.92.9a25 25 0 0 1-1.871-.183.25.25 0 0 0-.068.495c.55.076 1.232.149 2.020.193a.25.25 0 0 0 .189-.071l.754-.736.847 1.710a.25.25 0 0 0 .404.062l.932-.97a25 25 0 0 0 1.922-.188.25.25 0 0 0-.068-.495c-.538.074-1.207.145-1.980.189a.25.25 0 0 0-.166.076l-.754.785-.842-1.700a.25.25 0 0 0-.182-.135"/><path d="M8.5 1.866a1 1 0 1 0-1 0V3h-2A4.5 4.5 0 0 0 1 7.5V8a1 1 0 0 0-1 1v2a1 1 0 0 0 1 1v1a2 2 0 0 0 2 2h10a2 2 0 0 0 2-2v-1a1 1 0 0 0 1-1V9a1 1 0 0 0-1-1v-.5A4.5 4.5 0 0 0 10.5 3h-2zM14 7.5V13a1 1 0 0 1-1 1H3a1 1 0 0 1-1-1V7.5A3.5 3.5 0 0 1 5.5 4h5A3.5 3.5 0 0 1 14 7.5"/></svg>
</div>
</body></html>
